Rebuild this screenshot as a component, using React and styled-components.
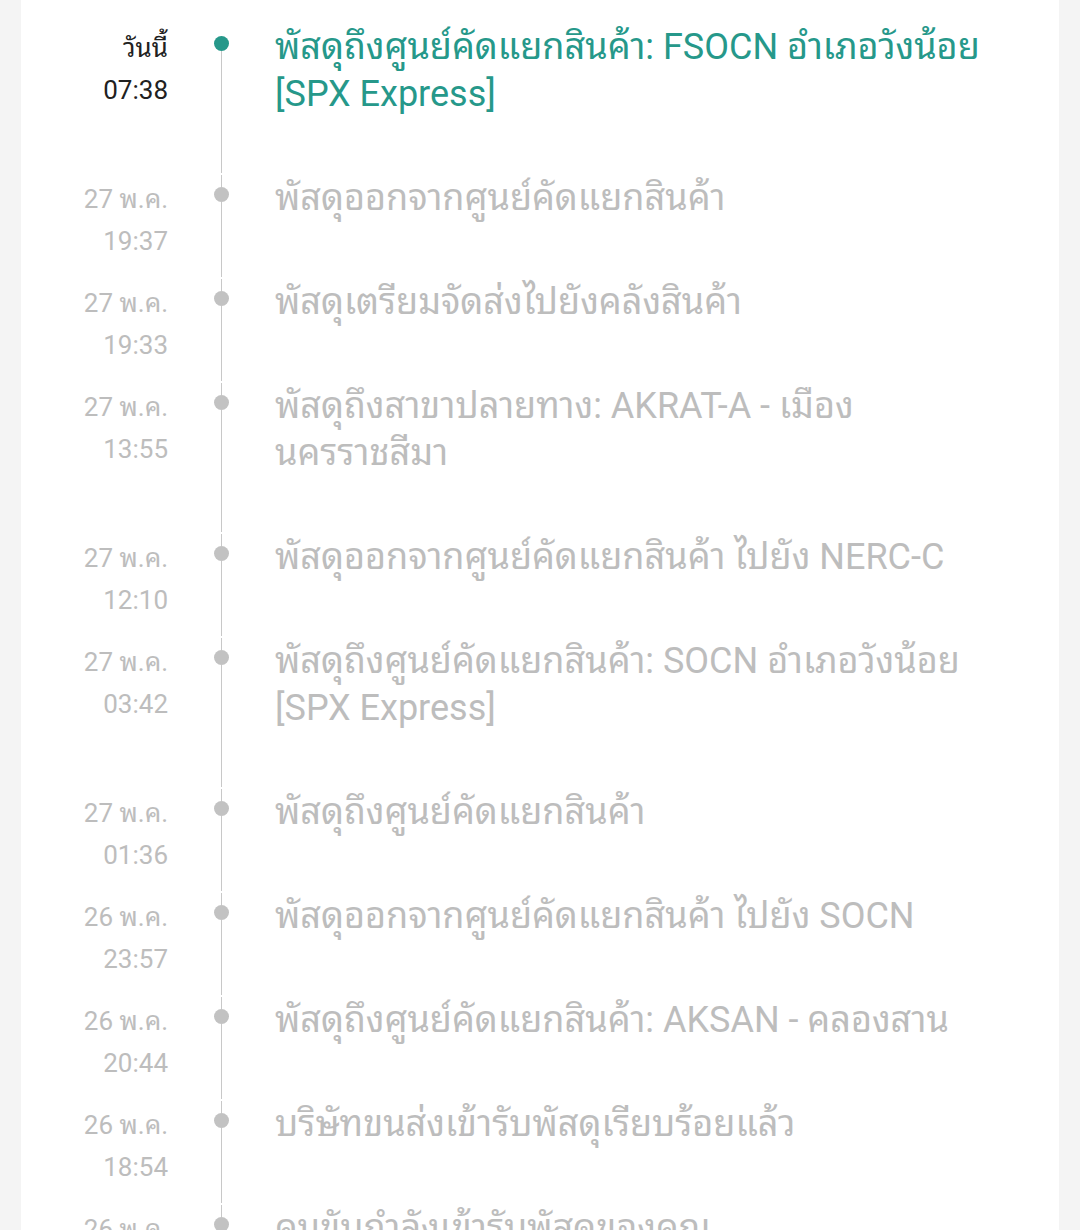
import React from 'react';
import styled, { createGlobalStyle } from 'styled-components';

const GlobalStyle = createGlobalStyle`
  html, body {
    margin: 0;
    padding: 0;
    background: #f4f4f4;
    height: 1230px;
    overflow: hidden;
  }
  body {
    font-family: Roboto, "Noto Sans Thai Looped", Loma, Garuda, "Noto Serif Thai", "Noto Sans Thai", "Noto Sans", sans-serif;
  }
`;

const Card = styled.div`
  background: #ffffff;
  margin: 0 21px;
  padding: 24px 24px 0 0;
  min-height: 1230px;
  box-sizing: border-box;
`;

const Row = styled.div`
  display: grid;
  grid-template-columns: 147px 106px 1fr;
`;

const DateCol = styled.div`
  text-align: right;
  font-size: 26px;
  line-height: 42px;
  color: ${p => (p.$active ? '#212121' : '#bdbdbd')};
  padding-top: 3px;
`;

const Rail = styled.div`
  display: flex;
  flex-direction: column;
  align-items: center;
  padding-bottom: 2px;
`;

const RailTop = styled.div`
  width: 1px;
  height: 12px;
  flex: none;
  background: ${p => (p.$first ? 'transparent' : '#c8c8c8')};
`;

const Dot = styled.div`
  width: 15px;
  height: 15px;
  border-radius: 50%;
  background: ${p => (p.$active ? '#26988a' : '#c2c2c2')};
  flex: none;
`;

const RailBottom = styled.div`
  width: 1px;
  flex: 1;
  background: #c8c8c8;
`;

const Text = styled.div`
  font-size: 36px;
  line-height: 47px;
  color: ${p => (p.$active ? '#26988a' : '#bdbdbd')};
  padding-bottom: 57px;
  padding-left: 1px;
`;

const events = [
  { day: 'วันนี้', time: '07:38', text: 'พัสดุถึงศูนย์คัดแยกสินค้า: FSOCN อำเภอวังน้อย [SPX Express]', active: true },
  { day: '27 พ.ค.', time: '19:37', text: 'พัสดุออกจากศูนย์คัดแยกสินค้า' },
  { day: '27 พ.ค.', time: '19:33', text: 'พัสดุเตรียมจัดส่งไปยังคลังสินค้า' },
  { day: '27 พ.ค.', time: '13:55', text: 'พัสดุถึงสาขาปลายทาง: AKRAT-A - เมือง นครราชสีมา' },
  { day: '27 พ.ค.', time: '12:10', text: 'พัสดุออกจากศูนย์คัดแยกสินค้า ไปยัง NERC-C' },
  { day: '27 พ.ค.', time: '03:42', text: 'พัสดุถึงศูนย์คัดแยกสินค้า: SOCN อำเภอวังน้อย [SPX Express]' },
  { day: '27 พ.ค.', time: '01:36', text: 'พัสดุถึงศูนย์คัดแยกสินค้า' },
  { day: '26 พ.ค.', time: '23:57', text: 'พัสดุออกจากศูนย์คัดแยกสินค้า ไปยัง SOCN' },
  { day: '26 พ.ค.', time: '20:44', text: 'พัสดุถึงศูนย์คัดแยกสินค้า: AKSAN - คลองสาน' },
  { day: '26 พ.ค.', time: '18:54', text: 'บริษัทขนส่งเข้ารับพัสดุเรียบร้อยแล้ว' },
  { day: '26 พ.ค.', time: '18:20', text: 'คนขับกำลังเข้ารับพัสดุของคุณ' },
];

const App = () => (
  <>
    <GlobalStyle />
    <Card>
      {events.map((e, i) => (
        <Row key={i}>
          <DateCol $active={e.active}>
            <div>{e.day}</div>
            <div>{e.time}</div>
          </DateCol>
          <Rail>
            <RailTop $first={i === 0} />
            <Dot $active={e.active} />
            <RailBottom />
          </Rail>
          <Text $active={e.active}>{e.text}</Text>
        </Row>
      ))}
    </Card>
  </>
);

export default App;
